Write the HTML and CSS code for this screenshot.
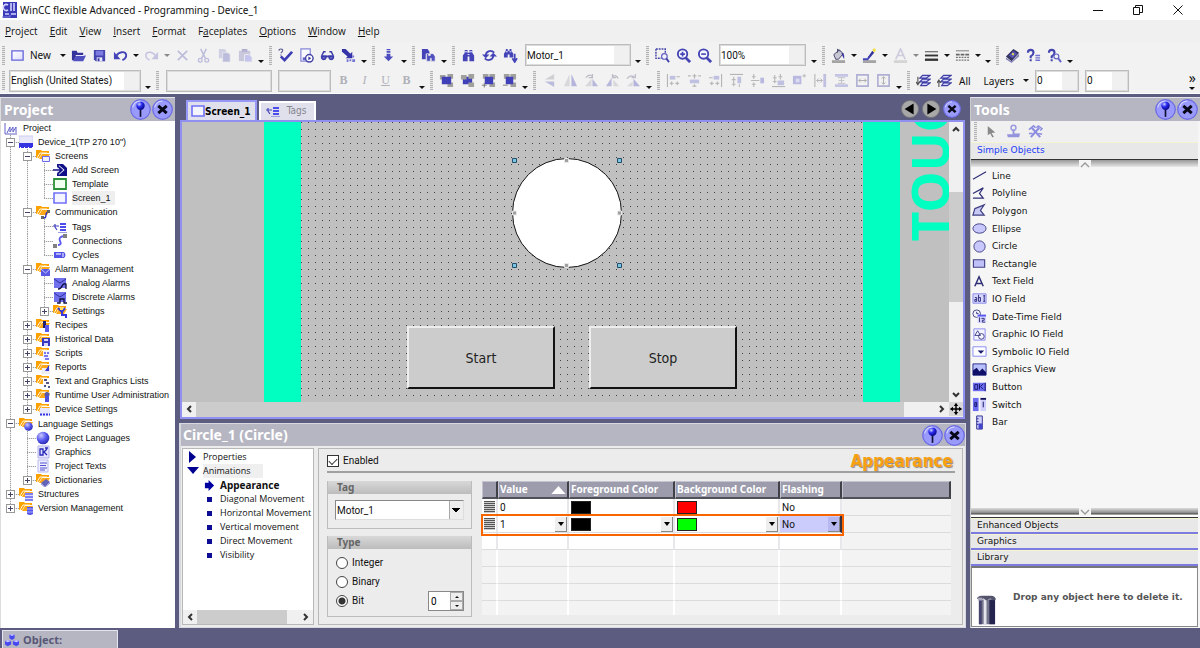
FILE: index.html
```html
<!DOCTYPE html>
<html lang="en">
<head>
<meta charset="utf-8">
<title>WinCC flexible Advanced - Programming - Device_1</title>
<link rel="stylesheet" href="styles.css">
</head>
<body>
<svg class="defs" aria-hidden="true">
<defs>
<radialGradient id="ball" cx=".35" cy=".3" r=".8"><stop offset="0" stop-color="#c8c8ff"/><stop offset=".5" stop-color="#5a5af0"/><stop offset="1" stop-color="#2020a8"/></radialGradient>
<radialGradient id="pinhead" cx=".35" cy=".3" r=".8"><stop offset="0" stop-color="#d0d8ff"/><stop offset=".4" stop-color="#2a2af0"/><stop offset="1" stop-color="#000070"/></radialGradient>
<linearGradient id="scr" x2="1" y2="1"><stop offset="0" stop-color="#fff"/><stop offset="1" stop-color="#dcdcff"/></linearGradient>
</defs>
<symbol id="app" viewBox="0 0 16 16"><path d="M1 0h14v16H1z" fill="#3a3ab8"/><path d="M6 3a3 3 0 1 0 0 5M9 1v8M12 1v8M3 12h4M9 12h5" stroke="#d4d4ff" stroke-width="1.6" fill="none"/><path d="M0 15h8v-2" stroke="#8080e0" fill="none"/></symbol>
<symbol id="screen" viewBox="0 0 16 16"><path d="M2 3h12v10H2z" fill="url(#scr)" stroke="#6464dc" stroke-width="1.4"/></symbol>
<symbol id="open" viewBox="0 0 16 16"><path d="M1 13V3h5l1 2h6v3H6l-3 5z" fill="#34349c"/><path d="M6 8h10l-3 6H2z" fill="#5050c0"/><path d="M5 8h9" stroke="#f0f0ff"/></symbol>
<symbol id="save" viewBox="0 0 16 16"><path d="M2 2h12v12H4l-2-2z" fill="#4444b0"/><path d="M4 3h8v5H4z" fill="#7c7ce0"/><path d="M5 10h6v4H5z" fill="#e8e8ff"/><path d="M6 11h2v3H6z" fill="#34349c"/></symbol>
<symbol id="undo" viewBox="0 0 16 16"><path d="M4 8c2-4 9-5 10-1 .5 3-2 5-4 6" fill="none" stroke="#4444b8" stroke-width="2"/><path d="M1 4v8h7z" fill="#4444b8"/></symbol>
<symbol id="redo" viewBox="0 0 16 16"><path d="M12 8C10 4 3 3 2 7c-.5 3 2 5 4 6" fill="none" stroke="#c4c4e0" stroke-width="1.6"/><path d="M15 4v8H8z" fill="#c4c4e0"/></symbol>
<symbol id="del" viewBox="0 0 16 16"><path d="M3 3l10 10M13 3L3 13" stroke="#bcbcdc" stroke-width="1.8"/></symbol>
<symbol id="cut" viewBox="0 0 16 16"><path d="M5 1l5 10M11 1L6 11" stroke="#bcbcdc" stroke-width="1.6"/><circle cx="4.500" cy="13" r="2" fill="none" stroke="#bcbcdc" stroke-width="1.400"/><circle cx="11.500" cy="13" r="2" fill="none" stroke="#bcbcdc" stroke-width="1.400"/></symbol>
<symbol id="copy" viewBox="0 0 16 16"><path d="M2 1h6l2 2v8H2z" fill="#d0d0e4"/><path d="M6 5h6l2 2v8H6z" fill="#bcbcdc" stroke="#eee" stroke-width=".7"/></symbol>
<symbol id="paste" viewBox="0 0 16 16"><path d="M1 3h12v11H1z" fill="#c8c8dc"/><path d="M4 1h6v3H4z" fill="#b0b0d0"/><path d="M7 7h5l3 3v5H7z" fill="#c4c4ec" stroke="#eee"/></symbol>
<symbol id="check" viewBox="0 0 16 16"><path d="M3 9l4 4 8-9" fill="none" stroke="#3c3cb4" stroke-width="2.800"/><path d="M1 3q0-2 2-2 3 0 1.500 3L3 5.500M3 7v1" fill="none" stroke="#5a5a90" stroke-width="1.200"/></symbol>
<symbol id="gen" viewBox="0 0 16 16"><path d="M2 1h10v13H2z" fill="#f8f8ff" stroke="#8888d8" stroke-width="1.300"/><path d="M4 10h3v3H4z" fill="#6464c8"/><circle cx="11" cy="11" r="4" fill="#fff" stroke="#4444a8" stroke-width="1.500"/><path d="M10 9l3 2-3 2z" fill="#3434a0"/></symbol>
<symbol id="glasses" viewBox="0 0 16 16"><path d="M2 8l2-4h2M14 8l-2-4h-2" fill="none" stroke="#3c3ca8" stroke-width="1.600"/><path d="M1 8h14v2H1z" fill="#3c3cac"/><path d="M1 8h6v3q-1 2-3 2t-3-2zM9 8h6v3q-1 2-3 2t-3-2z" fill="#3c3cac"/><path d="M3 10h2v1H3zM11 10h2v1h-2z" fill="#a8a8e8"/></symbol>
<symbol id="transfer" viewBox="0 0 16 16"><path d="M1 1h4l5 5 2-2v7H5l2-2-6-5z" fill="#3434a8"/><path d="M12 8h2v2h-2zM9 12h2v2H9zM12 12h3v3h-3zM6 12h2v3H6z" fill="#7878d8"/></symbol>
<symbol id="down" viewBox="0 0 16 16"><path d="M6 1h4v1H6zM6 3h4v2H6zM6 6h4v3h3l-5 5-5-5h3z" fill="#4c4cc0"/></symbol>
<symbol id="bino" viewBox="0 0 16 16"><path d="M4 2h3v3h2V2h3v3l2 3v6H9V9H7v5H2V8l2-3z" fill="#4444b8"/><path d="M4 4h3M9 4h3M7 7h2" stroke="#f0f0ff"/></symbol>
<symbol id="bino2" viewBox="0 0 16 16"><path d="M1 1h6l2 3v2H5v6H1z" fill="#4444b8"/><path d="M6 6h2v2h2V6h3l2 3v5h-4v-3h-1v3H6z" fill="#5050c0" stroke="#eee" stroke-width=".6"/></symbol>
<symbol id="binod" viewBox="0 0 16 16"><path d="M3 1h2v2h2V1h2v2l2 3v4H7V7H5v3H1V6l2-3z" fill="#4444b8"/><path d="M3 4h2M7 4h2" stroke="#f0f0ff"/><path d="M12.500 6v8M10 11l2.500 4L15 11" stroke="#4444b8" stroke-width="1.800" fill="none"/></symbol>
<symbol id="refresh" viewBox="0 0 16 16"><path d="M13 5C9 1 4 4 4 8M3 11c4 4 9 1 9-3" fill="none" stroke="#4444b8" stroke-width="2"/><path d="M0 7h8l-4 4zM16 9H8l4-4z" fill="#4444b8"/></symbol>
<symbol id="zsel" viewBox="0 0 16 16"><path d="M1 1h10v7M1 1v10h6" fill="none" stroke="#4444a8" stroke-width="1.500" stroke-dasharray="2 1"/><circle cx="10" cy="9" r="3" fill="#f0f0ff" stroke="#6464c0" stroke-width="1.300"/><path d="M12 11l3 4" stroke="#4444a8" stroke-width="2"/></symbol>
<symbol id="zin" viewBox="0 0 16 16"><circle cx="7" cy="6.500" r="5" fill="#f4f4ff" stroke="#4444b4" stroke-width="2"/><path d="M10 10l5 5" stroke="#4444b4" stroke-width="3"/><path d="M7 4v5M4.500 6.500h5" stroke="#4444b4" stroke-width="1.700"/></symbol>
<symbol id="zout" viewBox="0 0 16 16"><circle cx="7" cy="6.500" r="5" fill="#f4f4ff" stroke="#4444b4" stroke-width="2"/><path d="M10 10l5 5" stroke="#4444b4" stroke-width="3"/><path d="M4.500 6.500h5" stroke="#4444b4" stroke-width="1.700"/></symbol>
<symbol id="bucket" viewBox="0 0 16 16"><path d="M1 13h14v3H1z" fill="#a4a4a4"/><path d="M3 7l6-5 4 4-5 6H5z" fill="#c8c8d4" stroke="#44446c"/><path d="M7 5V1l3 3" stroke="#44446c" fill="none"/><path d="M11 5q4 0 3 7l-2-4z" fill="#34349c"/></symbol>
<symbol id="brush" viewBox="0 0 16 16"><path d="M1 13h14v3H1z" fill="#a4a4a4"/><path d="M6 10l5-7 2 2-5 6z" fill="#34349c"/><path d="M11 2l2-2 2 2-2 3z" fill="#f0e040"/><path d="M1 12h5l2-3" stroke="#4444b8" stroke-width="2" fill="none"/></symbol>
<symbol id="fontc" viewBox="0 0 16 16"><path d="M1 13h14v3H1z" fill="#d4d4d4"/><path d="M3 12l5-11 5 11M5 8h6" fill="none" stroke="#ccccde" stroke-width="1.800"/></symbol>
<symbol id="lines" viewBox="0 0 16 16"><path d="M1 4h14" stroke="#444"/><path d="M1 8h14" stroke="#333" stroke-width="2"/><path d="M1 12.500h14" stroke="#333" stroke-width="2.500"/></symbol>
<symbol id="dashes" viewBox="0 0 16 16"><path d="M1 3h14" stroke="#777"/><path d="M1 7h14" stroke="#666" stroke-width="2" stroke-dasharray="4 1"/><path d="M1 10h14M1 13h14" stroke="#777" stroke-width="1.400" stroke-dasharray="2 1"/></symbol>
<symbol id="book" viewBox="0 0 16 16"><path d="M1 9l8-8 6 4-8 9z" fill="#34345c"/><path d="M4 8l5-5 4 3-5 5z" fill="#5454b8"/><path d="M1 10l6 4 8-8v3l-8 7-6-4z" fill="#8484b8"/><path d="M8 5l2 1-1 2-2-1z" fill="#f0e040"/></symbol>
<symbol id="help" viewBox="0 0 16 16"><path d="M2 5q0-3 3-3t3 3q0 2-3 4v2M5 12v2" fill="none" stroke="#4444b0" stroke-width="2.200"/><path d="M10 8h5M10 10.500h5M10 13h5" stroke="#7070d0" stroke-width="1.500"/></symbol>
<symbol id="helps" viewBox="0 0 16 16"><path d="M2 5q0-3 3-3t3 3q0 2-3 4v2M5 12v2" fill="none" stroke="#4444b0" stroke-width="2.200"/><circle cx="10" cy="9" r="2.600" fill="none" stroke="#6464c8" stroke-width="1.300"/><path d="M12 11l3 4" stroke="#6464c8" stroke-width="2"/></symbol>
<symbol id="front" viewBox="0 0 16 16"><path d="M1 2h6v5H1zM9 1h6v5H9zM9 10h6v5H9z" fill="#a0a09c"/><path d="M3 4h10v8H3z" fill="#4040b8"/></symbol>
<symbol id="back" viewBox="0 0 16 16"><path d="M3 4h10v8H3z" fill="#4040b8"/><path d="M1 2h6v5H1zM9 1h6v5H9zM9 10h6v5H9z" fill="#a0a09c"/></symbol>
<symbol id="fwd" viewBox="0 0 16 16"><path d="M2 1h6v5H2zM9 1h6v6H9zM9 10h6v5H9z" fill="#a0a09c"/><path d="M4 4h9v8H4z" fill="#4040b8"/><path d="M1 13h5M3.500 10.500v5" stroke="#777"/></symbol>
<symbol id="bwd" viewBox="0 0 16 16"><path d="M2 1h6v5H2zM9 1h6v6H9zM9 10h6v5H9z" fill="#a0a09c"/><path d="M4 4h8v8H4z" fill="#4040b8"/><path d="M1 13h5" stroke="#777"/></symbol>
<symbol id="flipv" viewBox="0 0 16 16"><path d="M3 7l10-6v6z" fill="#d0d0d4"/><path d="M3 9h10v6z" fill="#bcbcdc"/></symbol>
<symbol id="fliph" viewBox="0 0 16 16"><path d="M7 1v13H1z" fill="#d8d8dc"/><path d="M9 1v13h6z" fill="#b4b4dc"/></symbol>
<symbol id="rotr" viewBox="0 0 16 16"><path d="M1 14l7-8v8z" fill="#d8d8dc"/><path d="M9 6v8h6z" fill="#b8b8dc"/><path d="M2 5q4-5 7-1M9 1v4H5" fill="none" stroke="#bcbcc8" stroke-width="1.300"/></symbol>
<symbol id="rotl" viewBox="0 0 16 16"><path d="M1 14l6-9v9z" fill="#b8b8dc"/><path d="M9 7v7h6z" fill="#d8d8dc"/><path d="M14 6q-2-5-6-2M8 1v4h4" fill="none" stroke="#bcbcc8" stroke-width="1.300"/></symbol>
<symbol id="rot" viewBox="0 0 16 16"><path d="M8 14V6l7 8z" fill="#b4b4dc"/><path d="M1 14h6V9z" fill="#d8d8dc"/><path d="M1 6q4-5 9-1M10 1v4H6" fill="none" stroke="#c0c0cc" stroke-width="1.400"/></symbol>
<symbol id="al" viewBox="0 0 16 16"><path d="M1.500 1v14" stroke="#aaa"/><path d="M4 3h6v4H4z" fill="#c0c0e0"/><path d="M4 11h4M6 9v4M10 11h4M12 9v4M11 4h4" stroke="#b8b8b8" stroke-width="1.200"/></symbol>
<symbol id="ac" viewBox="0 0 16 16"><path d="M3 7h10v4H3z" fill="#c0c0e0"/><path d="M8 1v5M6 3h4M8 12v3M1 3h3M12 3h3M6 14h4" stroke="#b8b8b8" stroke-width="1.200"/></symbol>
<symbol id="ar" viewBox="0 0 16 16"><path d="M14.500 1v14" stroke="#aaa"/><path d="M6 3h6v4H6z" fill="#c0c0e0"/><path d="M1 5h4M8 11h4M10 9v4M2 11h4M4 9v4" stroke="#b8b8b8" stroke-width="1.200"/></symbol>
<symbol id="at" viewBox="0 0 16 16"><path d="M1 1.500h14" stroke="#aaa"/><path d="M9 4h4v7H9z" fill="#c0c0e0"/><path d="M5 4v10M3 7h4M3 12h4M11 12v3" stroke="#b8b8b8" stroke-width="1.200"/></symbol>
<symbol id="am" viewBox="0 0 16 16"><path d="M11 5h4v6h-4z" fill="#b8b8e0"/><path d="M4 1v5M2 4h4M4 10v5M2 12h4M1 8h9" stroke="#b8b8b8" stroke-width="1.200"/></symbol>
<symbol id="ab" viewBox="0 0 16 16"><path d="M1 14.500h14" stroke="#aaa"/><path d="M7 8h7v5H7z" fill="#c0c0e0"/><path d="M4 2v9M2 5h4M2 9h4M10 1v6M8 4h4" stroke="#b8b8b8" stroke-width="1.200"/></symbol>
<symbol id="sq" viewBox="0 0 16 16"><path d="M1 3h9v9H1z" fill="#b8b8e0"/><path d="M4 6h4v4H4z" fill="#dcdcf4"/><path d="M13 1v4M11 3h4" stroke="#b8b8b8"/></symbol>
<symbol id="sph" viewBox="0 0 16 16"><path d="M2 1v14" stroke="#aaa"/><path d="M11 1h3v14h-3z" fill="#c0c0e0"/><path d="M4 8h6M6 6L4 8l2 2M8 6l2 2-2 2" fill="none" stroke="#b0b0b8"/></symbol>
<symbol id="spv" viewBox="0 0 16 16"><path d="M1 1h14v3H1zM1 12h14v3H1z" fill="#c4c4e4"/><path d="M8 5v6M5 8h6M4 5h8M4 11h8" stroke="#c0c0c8"/></symbol>
<symbol id="szh" viewBox="0 0 16 16"><path d="M2 2h12v12H2z" fill="none" stroke="#b0b0d4" stroke-width="1.800"/><path d="M4 8h8M6 6L4 8l2 2M10 6l2 2-2 2" fill="none" stroke="#aaa"/></symbol>
<symbol id="szv" viewBox="0 0 16 16"><path d="M2 2h12v12H2z" fill="none" stroke="#b0b0d4" stroke-width="1.800"/><path d="M8 4v8M6 6l2-2 2 2M6 10l2 2 2-2" fill="none" stroke="#aaa"/></symbol>
<symbol id="lay1" viewBox="0 0 16 16"><path d="M7 2.500h8l-4 3H4zM7 6.500h8l-4 3H4zM7 10.500h8l-4 3H5z" fill="#d4d4ff" stroke="#4040a4" stroke-width="1.300"/><path d="M2 4v8M0 9.500l2 3 2-3" stroke="#555" fill="none" stroke-width="1.200"/></symbol>
<symbol id="lay2" viewBox="0 0 16 16"><path d="M7 2.500h8l-4 3H4zM7 6.500h8l-4 3H4zM7 10.500h8l-4 3H5z" fill="#d4d4ff" stroke="#4040a4" stroke-width="1.300"/><path d="M2 15V8M0 10.500l2-3 2 3" stroke="#555" fill="none" stroke-width="1.200"/></symbol>
<symbol id="pin" viewBox="0 0 20 20"><circle cx="10" cy="10" r="9.300" fill="#9a9afc" stroke="#6c6ce4" stroke-width="1.200"/><path d="M2.500 8A8 8 0 0 1 10 2" stroke="#d8d8ff" fill="none"/><path d="M10 8v9" stroke="#101030" stroke-width="1.600"/><circle cx="10" cy="6.500" r="4" fill="url(#pinhead)"/></symbol>
<symbol id="close" viewBox="0 0 20 20"><circle cx="10" cy="10" r="9.300" fill="#9a9afc" stroke="#6c6ce4" stroke-width="1.200"/><path d="M2.500 8A8 8 0 0 1 10 2" stroke="#d8d8ff" fill="none"/><path d="M6 6.500l8 7M14 6.500l-8 7" stroke="#080818" stroke-width="2.800"/></symbol>
<symbol id="prev" viewBox="0 0 20 20"><circle cx="10" cy="10" r="9.500" fill="#a8a8a8" stroke="#777"/><path d="M14 4v12L4 10z" fill="#000"/></symbol>
<symbol id="next" viewBox="0 0 20 20"><circle cx="10" cy="10" r="9.500" fill="#a8a8a8" stroke="#777"/><path d="M6 4v12l10-6z" fill="#000"/></symbol>
<symbol id="prj" viewBox="0 0 14 14"><path d="M1 2v11h12M3 12l3-6v5l3-5v5l3-5v6" fill="none" stroke="#6060c8"/></symbol>
<symbol id="dev" viewBox="0 0 14 14"><path d="M0 1h14v8H0z" fill="#e8e8fa" stroke="#ccccf0"/><path d="M0 8h14v5H0z" fill="#3434e0"/><path d="M1 12.500h13" stroke="#fff" stroke-dasharray="1 3"/></symbol>
<symbol id="fold" viewBox="0 0 14 14"><path d="M0 1h5l1 1h7v2H6L3 9H0z" fill="#ffa200"/><path d="M3 10l3-5h8l-3 5z" fill="#ffa818"/><path d="M1 9l3-5h7" stroke="#fff4d8" fill="none"/></symbol>
<symbol id="f-scr" viewBox="0 0 14 14"><use href="#fold"/><path d="M6.500 7.500h7v5h-7z" fill="#f0f0ff" stroke="#6868f0"/></symbol>
<symbol id="f-com" viewBox="0 0 14 14"><use href="#fold"/><path d="M6 13h2q2 0 2-3t3-3" fill="none" stroke="#2828c0" stroke-width="1.300"/><path d="M11 5h3v3h-3zM5 11h3v3H5z" fill="#666"/></symbol>
<symbol id="f-alm" viewBox="0 0 14 14"><use href="#fold"/><path d="M5 7h9v7H5z" fill="#5a5ae4"/><path d="M5 7l4.500 4L14 7" stroke="#c8c8ff" fill="none"/></symbol>
<symbol id="f-set" viewBox="0 0 14 14"><use href="#fold"/><path d="M5 4l4 4 3-4M9 8v3h4v3" fill="none" stroke="#3838d8" stroke-width="2"/><path d="M7 3h3v3H7z" fill="#ffe060"/></symbol>
<symbol id="f-rec" viewBox="0 0 14 14"><use href="#fold"/><path d="M7 3h3v7H7z" fill="#202070"/><path d="M9 7h4v7H9z" fill="#5858ec"/></symbol>
<symbol id="f-his" viewBox="0 0 14 14"><use href="#fold"/><path d="M6 6h8v8H6z" fill="#3838c0"/><path d="M8 7h4v2H8zM8 11h4v3H8z" fill="#d8d8ff"/></symbol>
<symbol id="f-scp" viewBox="0 0 14 14"><use href="#fold"/><path d="M7 5h7v9H7z" fill="#f4f4ff"/><path d="M8 7h2M11 7h2M8 10h4M9 13h4" stroke="#5050e8" stroke-width="1.300"/></symbol>
<symbol id="f-rep" viewBox="0 0 14 14"><use href="#fold"/><path d="M6 8h8v6H5z" fill="#eee"/><path d="M5 14l4-3 4-6v6H9" fill="#3838d8"/></symbol>
<symbol id="f-txt" viewBox="0 0 14 14"><use href="#fold"/><path d="M7 5h7v9H7z" fill="#fff"/><path d="M8 6h3M10 9h3M8 12h2M12 13h2" stroke="#202060" stroke-width="1.500"/></symbol>
<symbol id="f-usr" viewBox="0 0 14 14"><use href="#fold"/><circle cx="11" cy="6.500" r="2.500" fill="#5858a8"/><path d="M9 8h4v6H9z" fill="#5050e0"/></symbol>
<symbol id="f-dev" viewBox="0 0 14 14"><use href="#fold"/><path d="M4 6h10v8H4z" fill="#e8e8fc"/><path d="M4 12.500h10" stroke="#3434e0" stroke-width="2" stroke-dasharray="2 1"/></symbol>
<symbol id="f-lng" viewBox="0 0 14 14"><use href="#fold"/><circle cx="9.500" cy="9.500" r="4.300" fill="url(#ball)"/></symbol>
<symbol id="f-dic" viewBox="0 0 14 14"><use href="#fold"/><path d="M5 10l5-4 4 3-5 5z" fill="#6464b8"/><path d="M5 11l4 3 5-4" stroke="#9090e0" fill="none"/></symbol>
<symbol id="f-str" viewBox="0 0 14 14"><use href="#fold"/><path d="M6 6h8v8H6z" fill="#8080f4"/><path d="M6 8.500h8M6 11.500h8" stroke="#d8d8ff"/></symbol>
<symbol id="f-ver" viewBox="0 0 14 14"><use href="#fold"/><path d="M8 6h6v7q-3 2-6 0z" fill="#5454e8"/><path d="M8 8h6M8 11h6" stroke="#b0b0ff"/></symbol>
<symbol id="add" viewBox="0 0 14 14"><path d="M4 1h6l4 4v8H4z" fill="#101088"/><path d="M0 7h8M5 3.500L9 7l-4 3.500" stroke="#fff" stroke-width="3.400" fill="none"/><path d="M0 7h8M5 3.500L9 7l-4 3.500" stroke="#101088" stroke-width="1.700" fill="none"/></symbol>
<symbol id="tmpl" viewBox="0 0 14 14"><path d="M1 2h12v10H1z" fill="#f0fff0" stroke="#2c9038" stroke-width="1.800"/></symbol>
<symbol id="scr1" viewBox="0 0 14 14"><path d="M1 2h12v10H1z" fill="#f4f4ff" stroke="#7070f8" stroke-width="1.600"/></symbol>
<symbol id="tags" viewBox="0 0 14 14"><path d="M0 6h6M2 4v3l2 3" stroke="#4444c0" stroke-width="1.200" fill="none"/><path d="M7 3h6v2H7zM7 6h6v2H7zM7 9h6v2H7z" fill="#4c4cec"/><path d="M5 12.500h9" stroke="#9c9ce0"/></symbol>
<symbol id="conn" viewBox="0 0 14 14"><path d="M5 11q4 0 2-4t4-5" fill="none" stroke="#5858f0" stroke-width="1.800"/><path d="M10 0h4v4h-4zM0 10h4v4H0z" fill="#808080"/></symbol>
<symbol id="cyc" viewBox="0 0 14 14"><path d="M1 4h10q3 3 0 6H1z" fill="#5454e8"/><path d="M3 6h5M10 5v4" stroke="#d0d0ff" stroke-width="1.400"/></symbol>
<symbol id="alarm" viewBox="0 0 14 14"><path d="M1 2h12v10H1z" fill="#7070ec"/><path d="M1 3l6 4 6-4" stroke="#3030a0" fill="none"/><path d="M5 13q3 0 4-3t4-2v5" stroke="#101040" fill="none" stroke-width="1.300"/></symbol>
<symbol id="alarmd" viewBox="0 0 14 14"><path d="M1 2h12v10H1z" fill="#7070ec"/><path d="M1 3l6 4 6-4" stroke="#3030a0" fill="none"/><path d="M4 13h3V9h4v4h3" stroke="#101040" fill="none" stroke-width="1.300"/></symbol>
<symbol id="globe" viewBox="0 0 14 14"><circle cx="7" cy="7" r="6.300" fill="url(#ball)"/></symbol>
<symbol id="gfx" viewBox="0 0 14 14"><path d="M2 1h11v12H2z" fill="#e4e4ff" stroke="#b0b0e8"/><path d="M4 4h3v6H4zM11 4L8 7l3 3M9 3h3" fill="none" stroke="#2828b8" stroke-width="1.300"/></symbol>
<symbol id="txt" viewBox="0 0 14 14"><path d="M2 1h10v12H2z" fill="#f0f0ff" stroke="#b8b8f0"/><path d="M4 4h7M4 6.500h6M4 9h7M4 11h5" stroke="#5050d0"/></symbol>
<symbol id="cube" viewBox="0 0 16 16"><path d="M5 2l3-1 3 1v4L8 8 5 6zM0 9l3-1 4 1v4l-4 2-3-2zM9 9l4-1 3 1v4l-3 2-4-2z" fill="#4848f0"/><path d="M5 2l3-1 3 1-3 1.500zM0 9l3-1 4 1-4 1.500zM9 9l4-1 3 1-3 1.500z" fill="#c8c8ff"/></symbol>
<symbol id="cursor" viewBox="0 0 16 16"><path d="M4 2l8 7-4 .500 2.500 4-1.500 1-2.500-4.500L4 12z" fill="#888"/></symbol>
<symbol id="stamp" viewBox="0 0 16 16"><circle cx="8" cy="4" r="2.600" fill="none" stroke="#9c9ce0" stroke-width="1.600"/><path d="M7 6h2v4h6l-1 4H2l-1-3h6z" fill="#9494dc"/></symbol>
<symbol id="tools" viewBox="0 0 16 16"><path d="M4 4l9 10M12 4L3 14" fill="none" stroke="#8c8ce0" stroke-width="2.200"/><path d="M1 6l5-4 2 2M9 4l2-2 4 3-2 2M1 10h4M11 10l4 1" fill="none" stroke="#8c8ce0" stroke-width="1.600"/></symbol>
<symbol id="o-line" viewBox="0 0 16 16"><path d="M1 12L15 4" stroke="#303078" stroke-width="1.300"/></symbol>
<symbol id="o-pline" viewBox="0 0 16 16"><path d="M1 8l11-6-4 6 4 5H1" fill="none" stroke="#303078" stroke-width="1.300"/></symbol>
<symbol id="o-pgon" viewBox="0 0 16 16"><path d="M3 6l10-4-4 6 4 5H1z" fill="#c8c8f4" stroke="#404084" stroke-width="1.300"/></symbol>
<symbol id="o-ell" viewBox="0 0 16 16"><ellipse cx="8" cy="8" rx="7" ry="5" fill="#c8c8fc" stroke="#404084"/></symbol>
<symbol id="o-circ" viewBox="0 0 16 16"><circle cx="8" cy="8" r="6" fill="#c8c8fc" stroke="#404084"/></symbol>
<symbol id="o-rect" viewBox="0 0 16 16"><path d="M1.500 4h12v8h-12z" fill="#c0c0f8" stroke="#404084" stroke-width="1.200"/></symbol>
<symbol id="o-text" viewBox="0 0 16 16"><path d="M3 13L7.500 3 12 13M4.500 10h6" fill="none" stroke="#303078" stroke-width="1.600"/></symbol>
<symbol id="o-io" viewBox="0 0 16 16"><path d="M1 3h14v10H1z" fill="#d8d8ff" stroke="#8888ec"/><path d="M3 7h2v4H3V9h2M7 4v7h2V7H7M12 5h2M13 5v6M12 11h2" fill="none" stroke="#28287c"/></symbol>
<symbol id="o-date" viewBox="0 0 16 16"><circle cx="5" cy="5" r="4" fill="#f4f4ff" stroke="#404084"/><path d="M5 3v2h2" stroke="#303078" fill="none"/><path d="M6 7h9v8H6z" fill="#d4d4ff"/><path d="M6 7h9" stroke="#5858f0" stroke-width="2"/><path d="M8 9v5M10 10h3v2h-2v2h3" fill="none" stroke="#303078"/></symbol>
<symbol id="o-gio" viewBox="0 0 16 16"><path d="M2 2h12v12H2z" fill="#f4f4ff" stroke="#8888f4"/><path d="M3 9l3-5 3 5z" fill="none" stroke="#404084"/><circle cx="10" cy="10" r="3" fill="none" stroke="#404084"/></symbol>
<symbol id="o-sio" viewBox="0 0 16 16"><path d="M1 3h14v10H1z" fill="#fff" stroke="#8888f4"/><path d="M6 7h7l-3.500 3.500z" fill="#181870"/></symbol>
<symbol id="o-gv" viewBox="0 0 16 16"><path d="M1 2h14v12H1z" fill="#b8c0fc" stroke="#282884"/><path d="M1 14V9l4-3 3 4 3-3 4 4v3z" fill="#101068"/></symbol>
<symbol id="o-btn" viewBox="0 0 16 16"><path d="M1 4h14v9H1z" fill="#6c6cf0"/><path d="M3 6h3v5H3zM8 5v6M12 5L9 8l3 3M14 4v9" fill="none" stroke="#14146c"/></symbol>
<symbol id="o-sw" viewBox="0 0 16 16"><path d="M1 1h6v14H1z" fill="#6c6cf0"/><path d="M9 3h6v12H9z" fill="#d0d0ff"/><path d="M9 2h6" stroke="#101060" stroke-width="2"/><path d="M3 6h2v4H3zM12 5v6" fill="none" stroke="#101060"/></symbol>
<symbol id="o-bar" viewBox="0 0 16 16"><path d="M5 1h6v14H5z" fill="#d0d0ff" stroke="#303090"/><path d="M7 9h4v6H7z" fill="#4444cc"/><path d="M5 4h2M5 7h2M5 10h2" stroke="#303090"/></symbol>
<symbol id="trash" viewBox="0 0 20 32"><path d="M2 5h17v26H2z" fill="#74748c"/><path d="M2 5h3v26H2z" fill="#44446c"/><path d="M7 5h3v26H7z" fill="#e4e4ec"/><path d="M13 5h6v26h-6z" fill="#24244c"/><path d="M0 4q1-3 5-3h10q4 0 5 4l-3 1-3-2-4 2-3-2-4 2z" fill="#54546c"/><path d="M1 3h5l-1 3H1z" fill="#a8a8bc"/></symbol>
<symbol id="move" viewBox="0 0 16 16"><path d="M8 1v14M1 8h14" stroke="#000" stroke-width="2"/><path d="M8 0l3 4H5zM8 16l3-4H5zM0 8l4-3v6zM16 8l-4-3v6z"/></symbol>
<symbol id="arrow" viewBox="0 0 12 12"><path d="M1 3h4V0l6 6-6 6V9H1z" fill="#0000a0"/></symbol>
</svg>

<div class="app">
<header class="title">
  <svg class="ic16"><use href="#app"/></svg><h1>WinCC flexible Advanced - Programming - Device_1</h1>
  <div class="winbtns">
    <button aria-label="Minimize"><svg viewBox="0 0 10 10"><path d="M0 5.500h10"/></svg></button>
    <button aria-label="Restore"><svg viewBox="0 0 10 10"><path d="M.500 2.500h6v7h-6zM2.500 2V.500h7v7H7"/></svg></button>
    <button aria-label="Close"><svg viewBox="0 0 10 10"><path d="M.500.500l9 9M9.500.500l-9 9"/></svg></button>
  </div>
</header>
<nav class="menu">
  <a href="#"><u>P</u>roject</a><a href="#"><u>E</u>dit</a><a href="#"><u>V</u>iew</a><a href="#"><u>I</u>nsert</a><a href="#"><u>F</u>ormat</a><a href="#">F<u>a</u>ceplates</a><a href="#"><u>O</u>ptions</a><a href="#"><u>W</u>indow</a><a href="#"><u>H</u>elp</a>
</nav>

<div class="bar">
  <i class="grip"></i>
  <button class="tb new"><svg><use href="#screen"/></svg>New</button><button class="dd" aria-label="New options"></button>
  <button class="tb" aria-label="Open"><svg><use href="#open"/></svg></button>
  <button class="tb" aria-label="Save"><svg><use href="#save"/></svg></button>
  <button class="tb" aria-label="Undo"><svg><use href="#undo"/></svg></button><button class="dd" aria-label="Undo list"></button>
  <button class="tb" aria-label="Redo"><svg><use href="#redo"/></svg></button><button class="dd dim" aria-label="Redo list"></button>
  <button class="tb" aria-label="Delete"><svg><use href="#del"/></svg></button>
  <button class="tb" aria-label="Cut"><svg><use href="#cut"/></svg></button>
  <button class="tb" aria-label="Copy"><svg><use href="#copy"/></svg></button>
  <button class="tb" aria-label="Paste"><svg><use href="#paste"/></svg></button>
  <button class="dd more" aria-label="More"></button><i class="grip"></i>
  <button class="tb" aria-label="Check"><svg><use href="#check"/></svg></button>
  <button class="tb" aria-label="Generate"><svg><use href="#gen"/></svg></button>
  <button class="tb" aria-label="Preview"><svg><use href="#glasses"/></svg></button>
  <button class="tb" aria-label="Transfer"><svg><use href="#transfer"/></svg></button>
  <button class="dd more" aria-label="More"></button><i class="grip"></i>
  <button class="tb" aria-label="Download"><svg><use href="#down"/></svg></button>
  <button class="dd more" aria-label="More"></button><i class="grip"></i>
  <button class="tb" aria-label="Find in project"><svg><use href="#bino2"/></svg></button>
  <button class="dd more" aria-label="More"></button><i class="grip"></i>
  <button class="tb" aria-label="Find"><svg><use href="#bino"/></svg></button>
  <button class="tb" aria-label="Replace"><svg><use href="#refresh"/></svg></button>
  <button class="tb" aria-label="Find next"><svg><use href="#binod"/></svg></button>
  <select class="cb w106" aria-label="Search text"><option>Motor_1</option></select>
  <button class="dd more" aria-label="More"></button><i class="grip"></i>
  <button class="tb" aria-label="Zoom selection"><svg><use href="#zsel"/></svg></button>
  <button class="tb" aria-label="Zoom in"><svg><use href="#zin"/></svg></button>
  <button class="tb" aria-label="Zoom out"><svg><use href="#zout"/></svg></button>
  <select class="cb w87" aria-label="Zoom factor"><option>100%</option></select>
  <button class="dd more" aria-label="More"></button><i class="grip"></i>
  <button class="tb" aria-label="Fill color"><svg><use href="#bucket"/></svg></button><button class="dd" aria-label="Fill colors"></button>
  <button class="tb" aria-label="Line color"><svg><use href="#brush"/></svg></button><button class="dd" aria-label="Line colors"></button>
  <button class="tb" aria-label="Font color"><svg><use href="#fontc"/></svg></button><button class="dd dim" aria-label="Font colors"></button>
  <button class="tb" aria-label="Line width"><svg><use href="#lines"/></svg></button><button class="dd" aria-label="Line widths"></button>
  <button class="tb" aria-label="Line style"><svg><use href="#dashes"/></svg></button><button class="dd" aria-label="Line styles"></button>
  <button class="dd more" aria-label="More"></button><i class="grip"></i>
  <button class="tb" aria-label="Contents"><svg><use href="#book"/></svg></button>
  <button class="tb" aria-label="Help index"><svg><use href="#help"/></svg></button>
  <button class="tb" aria-label="Help search"><svg><use href="#helps"/></svg></button>
  <button class="dd more" aria-label="More"></button>
</div>
<div class="bar">
  <i class="grip"></i>
  <select class="cb w131" aria-label="Language"><option>English (United States)</option></select>
  <button class="dd more" aria-label="More"></button><i class="grip"></i>
  <select class="cb off w106" aria-label="Font" disabled></select>
  <select class="cb off w53" aria-label="Font size" disabled></select>
  <button class="tb ltr" disabled><b>B</b></button><button class="tb ltr" disabled><em>I</em></button><button class="tb ltr" disabled><u>U</u></button><button class="tb ltr" disabled><b>B</b></button>
  <button class="dd more" aria-label="More"></button><i class="grip"></i>
  <button class="tb" aria-label="Bring to front"><svg><use href="#front"/></svg></button>
  <button class="tb" aria-label="Send to back"><svg><use href="#back"/></svg></button>
  <button class="tb" aria-label="Bring forward"><svg><use href="#fwd"/></svg></button>
  <button class="tb" aria-label="Send backward"><svg><use href="#bwd"/></svg></button>
  <button class="dd more" aria-label="More"></button><i class="grip"></i>
  <button class="tb" aria-label="Flip vertically"><svg><use href="#flipv"/></svg></button>
  <button class="tb" aria-label="Flip horizontally"><svg><use href="#fliph"/></svg></button>
  <button class="tb" aria-label="Rotate right"><svg><use href="#rotr"/></svg></button>
  <button class="tb" aria-label="Rotate left"><svg><use href="#rotl"/></svg></button>
  <button class="tb" aria-label="Rotate"><svg><use href="#rot"/></svg></button>
  <button class="dd more" aria-label="More"></button><i class="grip"></i>
  <button class="tb" aria-label="Align left"><svg><use href="#al"/></svg></button>
  <button class="tb" aria-label="Align center"><svg><use href="#ac"/></svg></button>
  <button class="tb" aria-label="Align right"><svg><use href="#ar"/></svg></button>
  <button class="tb" aria-label="Align top"><svg><use href="#at"/></svg></button>
  <button class="tb" aria-label="Align middle"><svg><use href="#am"/></svg></button>
  <button class="tb" aria-label="Align bottom"><svg><use href="#ab"/></svg></button>
  <button class="tb" aria-label="Same size"><svg><use href="#sq"/></svg></button>
  <button class="tb" aria-label="Space horizontally"><svg><use href="#sph"/></svg></button>
  <button class="tb" aria-label="Space vertically"><svg><use href="#spv"/></svg></button>
  <button class="tb" aria-label="Same width"><svg><use href="#szh"/></svg></button>
  <button class="tb" aria-label="Same height"><svg><use href="#szv"/></svg></button>
  <button class="dd more" aria-label="More"></button><i class="grip"></i>
  <button class="tb" aria-label="Layer down"><svg><use href="#lay1"/></svg></button>
  <button class="tb" aria-label="Layer up"><svg><use href="#lay2"/></svg></button>
  <button class="word">All</button><button class="word layers">Layers</button><button class="dd" aria-label="Layers list"></button>
  <select class="cb w44" aria-label="Layer"><option>0</option></select>
  <select class="cb w44" aria-label="Active layer"><option>0</option></select>
  <button class="chev" aria-label="Toolbar options">»</button>
</div>

<main class="work">
  <section class="panel project">
    <header class="ph"><h2>Project</h2><button aria-label="Pin"><svg><use href="#pin"/></svg></button><button aria-label="Close"><svg><use href="#close"/></svg></button></header>
    <ul class="tree">
      <li><svg class="first"><use href="#prj"/></svg><span>Project</span></li>
      <li><button class="tw" aria-label="Collapse"></button><svg><use href="#dev"/></svg><span>Device_1(TP 270 10")</span></li>
      <li><i class="v"></i><button class="tw" aria-label="Collapse"></button><svg><use href="#f-scr"/></svg><span>Screens</span></li>
      <li><i class="v"></i><i class="v"></i><i class="t"></i><svg><use href="#add"/></svg><span>Add Screen</span></li>
      <li><i class="v"></i><i class="v"></i><i class="t"></i><svg><use href="#tmpl"/></svg><span>Template</span></li>
      <li><i class="v"></i><i class="v"></i><i class="l"></i><svg><use href="#scr1"/></svg><span class="sel">Screen_1</span></li>
      <li><i class="v"></i><button class="tw" aria-label="Collapse"></button><svg><use href="#f-com"/></svg><span>Communication</span></li>
      <li><i class="v"></i><i class="v"></i><i class="t"></i><svg><use href="#tags"/></svg><span>Tags</span></li>
      <li><i class="v"></i><i class="v"></i><i class="t"></i><svg><use href="#conn"/></svg><span>Connections</span></li>
      <li><i class="v"></i><i class="v"></i><i class="l"></i><svg><use href="#cyc"/></svg><span>Cycles</span></li>
      <li><i class="v"></i><button class="tw" aria-label="Collapse"></button><svg><use href="#f-alm"/></svg><span>Alarm Management</span></li>
      <li><i class="v"></i><i class="v"></i><i class="t"></i><svg><use href="#alarm"/></svg><span>Analog Alarms</span></li>
      <li><i class="v"></i><i class="v"></i><i class="t"></i><svg><use href="#alarmd"/></svg><span>Discrete Alarms</span></li>
      <li><i class="v"></i><i class="v"></i><button class="tw end" aria-label="Expand"></button><svg><use href="#f-set"/></svg><span>Settings</span></li>
      <li><i class="v"></i><button class="tw" aria-label="Expand"></button><svg><use href="#f-rec"/></svg><span>Recipes</span></li>
      <li><i class="v"></i><button class="tw" aria-label="Expand"></button><svg><use href="#f-his"/></svg><span>Historical Data</span></li>
      <li><i class="v"></i><button class="tw" aria-label="Expand"></button><svg><use href="#f-scp"/></svg><span>Scripts</span></li>
      <li><i class="v"></i><button class="tw" aria-label="Expand"></button><svg><use href="#f-rep"/></svg><span>Reports</span></li>
      <li><i class="v"></i><button class="tw" aria-label="Expand"></button><svg><use href="#f-txt"/></svg><span>Text and Graphics Lists</span></li>
      <li><i class="v"></i><button class="tw" aria-label="Expand"></button><svg><use href="#f-usr"/></svg><span>Runtime User Administration</span></li>
      <li><i class="v"></i><button class="tw end" aria-label="Expand"></button><svg><use href="#f-dev"/></svg><span>Device Settings</span></li>
      <li><button class="tw" aria-label="Collapse"></button><svg><use href="#f-lng"/></svg><span>Language Settings</span></li>
      <li><i class="v"></i><i class="t"></i><svg><use href="#globe"/></svg><span>Project Languages</span></li>
      <li><i class="v"></i><i class="t"></i><svg><use href="#gfx"/></svg><span>Graphics</span></li>
      <li><i class="v"></i><i class="t"></i><svg><use href="#txt"/></svg><span>Project Texts</span></li>
      <li><i class="v"></i><button class="tw end" aria-label="Expand"></button><svg><use href="#f-dic"/></svg><span>Dictionaries</span></li>
      <li><button class="tw" aria-label="Expand"></button><svg><use href="#f-str"/></svg><span>Structures</span></li>
      <li><button class="tw end" aria-label="Expand"></button><svg><use href="#f-ver"/></svg><span>Version Management</span></li>
    </ul>
  </section>

  <div class="center">
    <div class="tabs">
      <button class="tab on"><svg><use href="#scr1"/></svg>Screen_1</button>
      <button class="tab"><svg><use href="#tags"/></svg>Tags</button>
      <div class="nav"><button aria-label="Previous"><svg><use href="#prev"/></svg></button><button aria-label="Next"><svg><use href="#next"/></svg></button><button aria-label="Close editor"><svg><use href="#close"/></svg></button></div>
    </div>
    <section class="editor">
      <div class="canvas">
        <div class="band b1"></div><div class="dots"></div><div class="band b2"></div>
        <div class="touch">TOUCH</div>
        <svg class="circle" viewBox="0 0 112 112"><circle cx="56" cy="56" r="54.500" fill="#fff" stroke="#111"/>
          <g fill="#a0a0a0" stroke="#e8e8e8"><path d="M53.500 1.500h4v4h-4zM53.500 106.500h4v4h-4zM1.500 54h4v4h-4zM106.500 54h4v4h-4z"/></g>
          <g fill="#7cc4e0" stroke="#20506c"><path d="M1.500 1.500h4v4h-4zM106.500 1.500h4v4h-4zM1.500 106.500h4v4h-4zM106.500 106.500h4v4h-4z"/></g></svg>
        <button class="hmi start">Start</button><button class="hmi stop">Stop</button>
      </div>
      <div class="vs"><button aria-label="Scroll up"><svg viewBox="0 0 8 8"><path d="M1 6l3-3 3 3"/></svg></button><i></i><button aria-label="Scroll down"><svg viewBox="0 0 8 8"><path d="M1 2l3 3 3-3"/></svg></button></div>
      <div class="hs"><button aria-label="Scroll left"><svg viewBox="0 0 8 8"><path d="M6 1L3 4l3 3"/></svg></button><i></i><button aria-label="Scroll right"><svg viewBox="0 0 8 8"><path d="M2 1l3 3-3 3"/></svg></button></div>
      <button class="corner" aria-label="Navigate"><svg><use href="#move"/></svg></button>
    </section>

    <section class="panel props">
      <header class="ph"><h2>Circle_1 (Circle)</h2><button aria-label="Pin"><svg><use href="#pin"/></svg></button><button aria-label="Close"><svg><use href="#close"/></svg></button></header>
      <div class="pbody">
        <div class="ptree">
          <ul>
            <li><svg viewBox="0 0 12 12"><path d="M2 0l7 6-7 6z" fill="#000090"/></svg><a href="#">Properties</a></li>
            <li><svg viewBox="0 0 12 12"><path d="M0 2h12L6 9z" fill="#000090"/></svg><a href="#" class="sel">Animations</a></li>
            <li class="sub"><svg><use href="#arrow"/></svg><a href="#"><b>Appearance</b></a></li>
            <li class="sub"><i></i><a href="#">Diagonal Movement</a></li>
            <li class="sub"><i></i><a href="#">Horizontal Movement</a></li>
            <li class="sub"><i></i><a href="#">Vertical movement</a></li>
            <li class="sub"><i></i><a href="#">Direct Movement</a></li>
            <li class="sub"><i></i><a href="#">Visibility</a></li>
          </ul>
          <div class="hs"><button aria-label="Scroll left"><svg viewBox="0 0 8 8"><path d="M6 1L3 4l3 3"/></svg></button><i></i><button aria-label="Scroll right"><svg viewBox="0 0 8 8"><path d="M2 1l3 3-3 3"/></svg></button></div>
        </div>
        <div class="form">
          <div class="fhead"><label><input type="checkbox" checked>Enabled</label><h3>Appearance</h3></div>
          <div class="fcols">
            <div class="groups">
              <fieldset class="grp"><h4>Tag</h4>
                <div class="gb"><select class="combo" aria-label="Tag"><option>Motor_1</option></select></div>
              </fieldset>
              <fieldset class="grp type"><h4>Type</h4>
                <div class="radios">
                  <label><input type="radio" name="t">Integer</label>
                  <label><input type="radio" name="t">Binary</label>
                  <div class="bit"><label><input type="radio" name="t" checked>Bit</label>
                  <span class="spin"><input type="text" value="0" aria-label="Bit number"><span><button aria-label="Up"><i class="u"></i></button><button aria-label="Down"><i></i></button></span></span></div>
                </div>
              </fieldset>
            </div>
            <div class="tw-wrap">
              <table>
                <colgroup><col class="c0"><col class="c1"><col class="c2"><col class="c3"><col class="c4"><col></colgroup>
                <thead><tr><th></th><th><div>Value<svg viewBox="0 0 16 9"><path d="M0 9l8-9 8 9z" fill="#fff"/></svg></div></th><th>Foreground Color</th><th>Background Color</th><th>Flashing</th><th></th></tr></thead>
                <tbody>
                  <tr class="w"><td><i class="rh"></i></td><td>0</td><td><i class="sw black"></i></td><td><i class="sw red"></i></td><td>No</td><td></td></tr>
                  <tr class="w"><td><i class="rh"></i></td><td><div>1<button class="cd" aria-label="Value list"></button></div></td><td><div><i class="sw black"></i><button class="cd" aria-label="Foreground list"></button></div></td><td><div><i class="sw green"></i><button class="cd" aria-label="Background list"></button></div></td><td class="act"><div>No<button class="cd" aria-label="Flashing list"></button></div></td><td></td></tr>
                  <tr class="w"><td></td><td></td><td></td><td></td><td></td><td></td></tr>
                  <tr><td></td><td></td><td></td><td></td><td></td><td></td></tr>
                  <tr><td></td><td></td><td></td><td></td><td></td><td></td></tr>
                  <tr><td></td><td></td><td></td><td></td><td></td><td></td></tr>
                  <tr class="last"><td></td><td></td><td></td><td></td><td></td><td></td></tr>
                </tbody>
              </table>
              <div class="mark"></div>
            </div>
          </div>
        </div>
      </div>
    </section>
  </div>

  <section class="panel toolbox">
    <header class="ph"><h2>Tools</h2><button aria-label="Pin"><svg><use href="#pin"/></svg></button><button aria-label="Close"><svg><use href="#close"/></svg></button></header>
    <div class="tbar"><i class="grip"></i><button aria-label="Select"><svg><use href="#cursor"/></svg></button><button aria-label="Stamp"><svg><use href="#stamp"/></svg></button><button aria-label="Settings"><svg><use href="#tools"/></svg></button></div>
    <button class="cat cur">Simple Objects</button>
    <div class="slide up"><svg viewBox="0 0 12 8"><path d="M0 0h12v8H0z" fill="#f4f4f4"/><path d="M2 7l4-4 4 4" fill="none" stroke="#999" stroke-width="1.400"/></svg></div>
    <ul class="objs">
      <li><svg><use href="#o-line"/></svg>Line</li>
      <li><svg><use href="#o-pline"/></svg>Polyline</li>
      <li><svg><use href="#o-pgon"/></svg>Polygon</li>
      <li><svg><use href="#o-ell"/></svg>Ellipse</li>
      <li><svg><use href="#o-circ"/></svg>Circle</li>
      <li><svg><use href="#o-rect"/></svg>Rectangle</li>
      <li><svg><use href="#o-text"/></svg>Text Field</li>
      <li><svg><use href="#o-io"/></svg>IO Field</li>
      <li><svg><use href="#o-date"/></svg>Date-Time Field</li>
      <li><svg><use href="#o-gio"/></svg>Graphic IO Field</li>
      <li><svg><use href="#o-sio"/></svg>Symbolic IO Field</li>
      <li><svg><use href="#o-gv"/></svg>Graphics View</li>
      <li><svg><use href="#o-btn"/></svg>Button</li>
      <li><svg><use href="#o-sw"/></svg>Switch</li>
      <li><svg><use href="#o-bar"/></svg>Bar</li>
    </ul>
    <div class="slide down"><svg viewBox="0 0 12 8"><path d="M0 0h12v8H0z" fill="#f4f4f4"/><path d="M2 2l4 4 4-4" fill="none" stroke="#999" stroke-width="1.400"/></svg></div>
    <button class="cat">Enhanced Objects</button>
    <button class="cat">Graphics</button>
    <button class="cat">Library</button>
    <div class="drop"><svg><use href="#trash"/></svg><b>Drop any object here to delete it.</b></div>
  </section>
</main>
<footer class="status"><span><svg><use href="#cube"/></svg>Object:</span></footer>
</div>
</body>
</html>
```

FILE: styles.css
```css
* { box-sizing: border-box; }
body { margin: 0; background: #5c5c80; color: #111; font: 10px/14px Roboto, "Liberation Sans", sans-serif; }
button { margin: 0; padding: 0; border: 0; background: none; font: inherit; color: inherit; }
svg { display: block; flex: none; }
ul { list-style: none; margin: 0; padding: 0; }
h1, h2, h3, h4 { margin: 0; }
a { color: inherit; text-decoration: none; }
.defs { position: absolute; width: 0; height: 0; }
.app { display: flex; flex-direction: column; height: 100vh; min-width: 1200px; }

/* window title and menu */
.title { display: flex; align-items: center; gap: 2px; height: 20px; background: #fff; padding-left: 2px; }
.ic16 { width: 16px; height: 16px; }
.title h1 { font: 10px/20px "Noto Sans", sans-serif; }
.winbtns { display: flex; margin-left: auto; padding-right: 2px; }
.winbtns button { width: 40px; height: 18px; display: grid; place-items: center; }
.winbtns svg { width: 10px; height: 10px; fill: none; stroke: #111; }
.menu { display: flex; gap: 12px; height: 22px; padding-left: 5px; background: #f0f0f0; font: 10px/22px "Open Sans", sans-serif; }

/* toolbars */
.bar { display: flex; align-items: center; height: 26px; background: #f2f2f2; font-family: "Noto Sans", sans-serif; }
.bar + .bar { border-bottom: 1px solid #fff; }
.grip { flex: none; width: 3px; height: 19px; margin: 0 3px; background: repeating-linear-gradient(#b4b4b4 0 1px, #e8e8e8 1px 2px); }
.bar > .grip:first-child { margin-left: 2px; }
.tb { flex: none; width: 21px; height: 22px; display: flex; align-items: center; justify-content: center; }
.tb svg { width: 15px; height: 15px; }
.tb.new { width: 50px; gap: 5px; justify-content: flex-start; padding-left: 2px; }
.tb.ltr { font: 12px "Liberation Serif", serif; color: #b0b0b8; }
.dd { flex: none; width: 10px; height: 22px; display: grid; place-items: center; }
.dd::after { content: ""; border: 3px solid transparent; border-top-color: #111; border-bottom: 0; }
.dd.dim::after { border-top-color: #888; }
.dd.more { align-items: end; padding-bottom: 3px; }
.cb { flex: none; appearance: none; height: 22px; margin: 0 2px 0 4px; padding: 0 18px 0 1px; border: 1px solid #bcbcbc; outline: 1px solid #dcdcdc; outline-offset: -2px; border-radius: 0; color: #111; opacity: 1; font: 10px Roboto, sans-serif;
  background: linear-gradient(90deg, #fff calc(100% - 16px), #f0f0f0 0); }
.cb.off { background: #f2f2f2; }
.cb.w131 { width: 132px; margin-left: 1px; }
.w106 { width: 106px; }
.cb.w87 { width: 87px; margin-right: 3px; }
.w53 { width: 53px; }
.w44 { width: 44px; }
.word { margin-left: 4px; }
.word.layers { margin: 0 7px 0 13px; }
.chev { display: grid; justify-items: center; margin-left: auto; margin-right: 4px; font-size: 14px; line-height: 12px; gap: 3px; }
.chev::after { content: ""; border: 3px solid transparent; border-top-color: #111; border-bottom: 0; }

/* workspace */
.work { flex: 1; min-height: 0; display: grid; grid-template-columns: 175px minmax(0, 1fr) 230px; gap: 4px; padding-top: 3px; }
.panel { background: #fff; border-top: 1px solid #e4e4ec; }
.ph { display: flex; align-items: center; gap: 1px; height: 23px; padding: 0 2px 0 3px; background: #b6b6c2; }
.ph h2 { flex: 1; color: #fff; font: bold 14px/22px "Noto Sans", sans-serif; }
.ph svg { width: 21px; height: 21px; }

.project { border-left: 1px solid #ddd; }
.tree { display: grid; grid-auto-rows: 1fr; height: 394px; padding-left: 1px; font: 9px/14px "Liberation Sans", Arial, sans-serif; }
.tree li { display: flex; align-items: center; min-height: 0; white-space: nowrap; }
.tree svg { width: 14px; height: 14px; margin-right: 5px; }
.tree svg.first { margin-left: 2px; }
.tree li > i, .tw { flex: none; width: 17px; align-self: stretch; }
.tree .v { background: repeating-linear-gradient(#a0a0a0 0 1px, #e4e4e4 1px 2px) 8px 0 / 1px 100% no-repeat; }
.tree .t, .tree .l { background-image: repeating-linear-gradient(90deg, #a0a0a0 0 1px, #e4e4e4 1px 2px), repeating-linear-gradient(#a0a0a0 0 1px, #e4e4e4 1px 2px); background-position: 8px 7px, 8px 0; background-size: 9px 1px, 1px 100%; background-repeat: no-repeat; }
.tree .l { background-size: 9px 1px, 1px 50%; }
.tw {
  background: linear-gradient(#446, #446) 6px 7px / 5px 1px no-repeat,
    linear-gradient(#fff, #fff) 5px 4px / 7px 7px no-repeat,
    linear-gradient(#989898, #989898) 4px 3px / 9px 9px no-repeat,
    repeating-linear-gradient(#a0a0a0 0 1px, #e4e4e4 1px 2px) 8px 0 / 1px 100% no-repeat,
    repeating-linear-gradient(90deg, #a0a0a0 0 1px, #e4e4e4 1px 2px) 8px 7px / 9px 1px no-repeat; }
.tw.end { background-size: 5px 1px, 7px 7px, 9px 9px, 1px 50%, 9px 1px; }
.tw[aria-label="Expand"]::after { content: ""; display: block; width: 1px; height: 5px; margin: 1px auto 0; background: #446; }
.tree .sel, .ptree .sel { background: #efefef; padding-right: 4px; }

.center { display: flex; flex-direction: column; min-height: 0; }
.tabs { display: flex; align-items: flex-end; gap: 2px; height: 23px; padding-left: 7px; font: 10px "DejaVu Sans Condensed", "DejaVu Sans", sans-serif; }
.tab { display: flex; align-items: center; height: 19px; padding: 0 8px 2px 5px; background: #e0e0ec; border: 2px solid #fff; border-bottom: 0; color: #84848c; gap: 7px; }
.tab.on { height: 20px; border-color: #9898f8; font-weight: bold; color: #000; gap: 0; padding: 0 4px 0 3px; }
.tab svg { width: 14px; height: 14px; }
.nav { display: flex; gap: 3px; margin: 0 5px 0 auto; align-self: center; }
.nav svg { width: 18px; height: 18px; }
.editor { flex: 1; min-height: 0; margin: 0 1px; border: 2px solid #9090f0; display: grid; grid-template: minmax(0, 1fr) 15px / minmax(0, 1fr) 14px; background: #f0f0f0; }
.canvas { position: relative; overflow: hidden; background: #c0c0c0; }
.band { position: absolute; top: 0; bottom: 0; width: 37px; background: #00ffc0; }
.b1 { left: 82px; }
.b2 { left: 681px; }
.dots { position: absolute; left: 119px; top: 0; bottom: 0; width: 562px; background: conic-gradient(from 270deg at 1px 1px, #404040 0 25%, transparent 0) 0 0 / 7px 7px; }
.touch { position: absolute; left: 721px; bottom: 160px; writing-mode: vertical-rl; transform: rotate(180deg); color: #00ffc0; font: bold 52px/52px "Noto Sans", sans-serif; }
.circle { position: absolute; left: 329px; top: 35px; width: 112px; height: 112px; }
.hmi { position: absolute; top: 204px; width: 148px; height: 63px; background: #ccc; border: 2px solid #eee; border-right-color: #111; border-bottom-color: #111; font: 14px "DejaVu Sans Condensed", "DejaVu Sans", sans-serif; color: #222; }
.start { left: 225px; }
.stop { left: 407px; }
.vs, .hs { display: flex; background: #f0f0f0; }
.vs { flex-direction: column; }
.vs button, .hs button, .corner { flex: none; width: 14px; height: 14px; display: grid; place-items: center; }
.vs svg, .hs svg { width: 8px; height: 8px; fill: none; stroke: #333; stroke-width: 2; }
.vs i { height: 110px; margin: 56px 0 auto; background: #ccc; }
.hs i { flex: 1; margin-right: 31px; background: #ccc; }
.corner { background: #d8d8d8; }
.corner svg { width: 12px; height: 12px; }

/* property view */
.props { margin-top: 4px; background: #ececec; border: 1px solid #d8d8e0; border-left-width: 2px; display: flex; flex-direction: column; }
.props .ph { flex: none; height: 22px; padding-left: 2px; padding-right: 0; }
.pbody { flex: 1; min-height: 0; display: flex; gap: 4px; padding: 2px 2px 2px 1px; }
.ptree { width: 132px; overflow: hidden; border: 1px solid #b8b8b8; background: #fff; display: flex; flex-direction: column; font: 9px/14px "Open Sans", sans-serif; }
.ptree ul { flex: 1; padding: 1px 0 0 4px; }
.ptree li { display: flex; align-items: center; gap: 4px; height: 14px; white-space: nowrap; }
.ptree li svg { width: 12px; height: 12px; }
.ptree .sel { padding-right: 12px; }
.ptree li.sub { padding-left: 17px; gap: 6px; }
.ptree .sub svg { width: 11px; height: 11px; margin-right: -1px; }
.ptree .sub i { flex: none; width: 5px; height: 5px; margin: 0 2px 0 3px; background: #0c0c94; }
.ptree b { font: bold 10px/14px "Noto Sans", sans-serif; }
.ptree .hs i { margin-right: 12px; }
.form { flex: 1; min-width: 0; border: 1px solid #b8b8b8; padding: 2px 7px 7px 8px; }
.fhead { display: flex; align-items: center; justify-content: space-between; height: 22px; border-bottom: 2px solid #a0a0a0; padding: 0 2px 0 0; }
label { display: flex; align-items: center; gap: 4px; }
input[type=checkbox] { appearance: none; width: 12px; height: 12px; margin: 0; border: 1px solid #333; background: #fff; display: grid; place-items: center; }
input[type=checkbox]::after { content: ""; width: 7px; height: 4px; margin-bottom: 2px; border: solid #333; border-width: 0 0 1px 1px; rotate: -45deg; }
.fhead h3 { color: #f8a010; font: bold 17px/20px "DejaVu Sans Condensed", "DejaVu Sans", sans-serif; text-shadow: 1px 1px 1px #888; }
.fcols { display: flex; gap: 10px; padding: 8px 4px 0 0; }
.groups { width: 145px; flex: none; display: flex; flex-direction: column; gap: 7px; }
.grp { margin: 0; padding: 0; border: 1px solid #bcbcbc; border-top: 0; background: #ececec; }
.grp h4 { height: 13px; padding-left: 9px; background: linear-gradient(#d8d8d8, #bcbcbc); color: #666; font: bold 10px/13px "Noto Sans", sans-serif; }
.gb { height: 34px; padding: 6px 7px; }
.combo { appearance: none; width: 100%; height: 20px; padding: 0 1px; border: 1px solid #888; border-right-color: #ddd; border-bottom-color: #ddd; border-radius: 0; color: #111; font: 10px Roboto, sans-serif;
  background: linear-gradient(45deg, transparent 50%, #000 0) calc(100% - 7px) 7px / 4px 4px no-repeat, linear-gradient(-45deg, transparent 50%, #000 0) calc(100% - 3px) 7px / 4px 4px no-repeat, linear-gradient(90deg, #fff calc(100% - 14px), #a8a8a8 0 calc(100% - 13px), #eee 0); }
.radios { padding: 4px 7px 0 8px; height: 67px; }
.radios label { height: 19px; }
.radios .bit { display: flex; justify-content: space-between; align-items: center; height: 20px; }
input[type=radio] { appearance: none; width: 12px; height: 12px; margin: 0; border: 1px solid #444; border-radius: 50%; background: #fff; }
input[type=radio]:checked { background: radial-gradient(circle, #333 0 3px, #fff 4px); }
.spin { display: flex; width: 36px; height: 20px; border: 1px solid #888; background: #fff; }
.spin input { width: 21px; padding: 0 0 0 2px; border: 0; font: 10px Roboto, sans-serif; }
.spin span { flex: 1; display: flex; flex-direction: column; }
.spin button { flex: 1; display: grid; place-items: center; background: #eee; border: 1px solid #aaa; }
.spin i { border: 2px solid transparent; border-top-color: #111; border-bottom: 0; }
.spin i.u { rotate: 180deg; }

.tw-wrap { flex: 1; position: relative; min-width: 0; }
table { width: 100%; table-layout: fixed; border-collapse: separate; border-spacing: 0; background: #f3f3f3; font: 10px/15px Roboto, sans-serif; }
.c0 { width: 16px; } .c1 { width: 71px; } .c2 { width: 106px; } .c3 { width: 105px; } .c4 { width: 62px; }
th { height: 18px; padding: 0 1px; background: #9c9cac; border: 1px solid #c4c4d0; border-width: 1px 2px 2px 1px; border-right-color: #404048; border-bottom-color: #505058; color: #fff; text-align: left; font: bold 10px/13px "Noto Sans", sans-serif; white-space: nowrap; }
th div { display: flex; justify-content: space-between; align-items: center; }
th svg { width: 15px; height: 8px; }
td { height: 17px; padding: 0 0 0 2px; border-bottom: 1px solid #dcdcdc; border-right: 2px solid #fff; }
td:last-child { border-right: 0; }
.w td:not(:last-child) { background: #fff; border-right-color: #e8e8ec; }
.last td { height: 14px; border-bottom: 0; }
td > div { display: flex; align-items: center; justify-content: space-between; height: 16px; }
td .rh { display: block; width: 11px; height: 12px; background: repeating-linear-gradient(#555 0 1px, #ccc 1px 2px); }
.sw { display: block; width: 20px; height: 13px; border: 1px solid #222; }
.black { background: #000; } .red { background: #f00; } .green { background: #0f0; }
.cd { width: 12px; height: 15px; display: grid; place-items: center; background: #eee; border: solid #888; border-width: 0 1px 1px 0; }
.cd::after { content: ""; border: 3px solid transparent; border-top: 4px solid #000; border-bottom: 0; }
.w td.act { background: #ccccfc; border-right-color: #334; }
.act .cd { background: #b8b8f0; }
.mark { position: absolute; left: -1px; top: 33px; width: 363px; height: 22px; border: 2px solid #f86400; pointer-events: none; }

/* toolbox */
.toolbox { display: flex; flex-direction: column; background: #f6f6f6; font: 9px/14px "DejaVu Sans", Verdana, sans-serif; border-left: 1px solid #ccc; padding-right: 2px; }
.toolbox .ph { flex: none; margin-right: -2px; }
.tbar { flex: none; display: flex; align-items: center; height: 22px; background: #f0f0f0; border-bottom: 1px solid #f4f4d0; }
.tbar button { width: 22px; display: grid; place-items: center; }
.tbar svg { width: 15px; height: 15px; }
.cat { flex: none; height: 16px; padding-left: 6px; background: #e8e8e8; text-align: left; line-height: 13px; border-top: 1px solid #f4f4d0; border-bottom: 2px solid #7c7ce0; }
.cat.cur { color: #1c3cf8; border: 0; padding-bottom: 2px; }
.slide { flex: none; display: grid; justify-content: center; height: 8px; }
.slide svg { width: 12px; height: 8px; }
.slide.up { border-top: 1px solid #333; background: linear-gradient(#999, #e8e8e8); }
.slide.down { height: 10px; margin-top: auto; border-bottom: 1px solid #333; background: linear-gradient(#ddd, #888 5px, #444 6px, #fff 7px); }
.objs { display: grid; grid-auto-rows: 1fr; height: 264px; flex: none; }
.objs li { display: flex; align-items: center; gap: 5px; padding-left: 1px; min-height: 0; }
.objs svg { width: 15px; height: 15px; }
.drop { flex: none; display: flex; align-items: center; gap: 17px; height: 61px; margin-bottom: 1px; padding-left: 5px; background: #fff; border: 1px solid #888; border-top: 2px solid #777; color: #555; white-space: nowrap; }
.drop svg { width: 19px; height: 32px; align-self: flex-end; }
.drop b { font-size: 9px; }

.status { height: 20px; padding: 2px 0 0 2px; }
.status span { display: flex; align-items: center; gap: 4px; width: 116px; height: 18px; padding-left: 2px; background: #b6b6c2; border: 1px solid #e4e4ec; border-bottom: 0; color: #585878; font: bold 11px "Noto Sans", sans-serif; }
.status svg { width: 14px; height: 14px; }
```
